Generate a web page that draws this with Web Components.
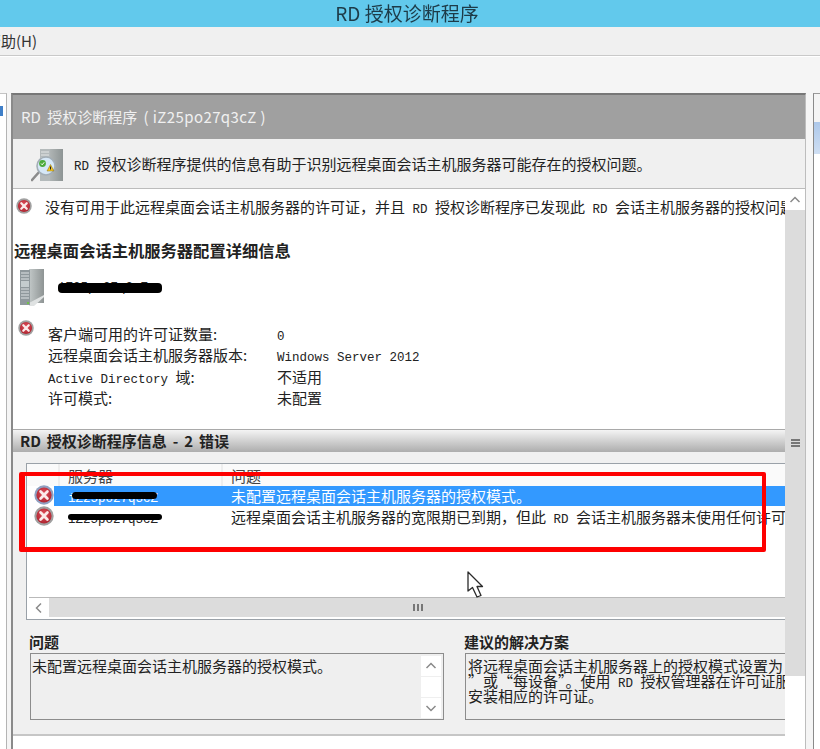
<!DOCTYPE html>
<html lang="zh-CN">
<head>
<meta charset="utf-8">
<title>RD 授权诊断程序</title>
<style>
  html, body { margin: 0; padding: 0; background: #f5f5f5; }
  body { width: 820px; height: 749px; overflow: hidden; font-family: "Noto Sans CJK SC", sans-serif; }
</style>
</head>
<body>
<rd-window>
  <title-bar>RD 授权诊断程序</title-bar>
  <menu-bar>帮助(H)</menu-bar>
  <tool-strip></tool-strip>
  <work-area>
    <left-pane slot="left"></left-pane>
    <result-panel></result-panel>
    <right-pane slot="right"></right-pane>
  </work-area>
  <red-frame slot="over"></red-frame>
  <mouse-pointer slot="over"></mouse-pointer>
</rd-window>

<script>
(function () {
  const define = (tag, html) => {
    customElements.define(tag, class extends HTMLElement {
      constructor() {
        super();
        this.shadow = this.attachShadow({ mode: 'open' });
        this.shadow.innerHTML = typeof html === 'function' ? html(this) : html;
      }
    });
  };

  define('rd-window', `
    <style>
      :host { display: block; position: relative; width: 820px; height: 749px; overflow: hidden; }
      .app { display: flex; flex-direction: column; height: 749px; filter: blur(0.45px); }
    </style>
    <div class="app"><slot></slot></div>
    <slot name="over"></slot>`);

  define('title-bar', `
    <style>
      :host { display: block; height: 27px; background: #62c9ec; color: #1d3b48; font-size: 19px; line-height: 26px;
              text-align: center; flex: none; }
      div { transform: translateX(-3px); }
    </style>
    <div><slot></slot></div>`);

  define('menu-bar', `
    <style>
      :host { display: block; height: 28px; background: #f0f0f0; border-bottom: 1px solid #c9c9c9; color: #333;
              font-size: 15px; line-height: 28px; flex: none; overflow: hidden; }
      div { margin-left: -14px; }
    </style>
    <div><slot></slot></div>`);

  define('tool-strip', `
    <style>:host { display: block; height: 37px; background: #f5f5f5; border-top: 1px solid #fff; box-sizing: border-box; flex: none; }</style>`);

  define('work-area', `
    <style>
      :host { display: flex; flex: 1; min-height: 0; }
    </style>
    <slot name="left"></slot><slot></slot><slot name="right"></slot>`);

  define('left-pane', `
    <style>
      :host { display: block; flex: none; width: 6px; margin-right: 4px; background: #fff; border-right: 1px solid #b4b4b4;
              border-top: 1px solid #c4c4c4; position: relative; }
      i { display: block; position: absolute; left: 0; top: 12px; width: 3px; height: 10px; background: #3f7fc8; }
    </style>
    <i></i>`);

  define('right-pane', `
    <style>
      :host { display: block; flex: 1; margin-left: 7px; background: #fff; border-left: 1px solid #8a8a8a; border-top: 1px solid #9a9a9a; }
      .head { height: 28px; background: #f4f4f4; }
      .sel { height: 32px; background: linear-gradient(#adc8ea, #cfdff3); }
    </style>
    <div class="head"></div><div class="sel"></div>`);

  define('error-icon', (el) => {
    const s = el.getAttribute('size') || 16;
    const ring = el.hasAttribute('selected') ? '#8f9fc0' : '#a0a0a0';
    return `
    <style>:host { display: block; flex: none; width: ${s}px; height: ${s}px; } svg { display: block; }</style>
    <svg width="${s}" height="${s}" viewBox="0 0 20 20">
      <defs><radialGradient id="g" cx="50%" cy="40%" r="60%"><stop offset="0" stop-color="#e4505c"/><stop offset="1" stop-color="#ad2430"/></radialGradient></defs>
      <circle cx="10" cy="10" r="9.7" fill="${ring}"/>
      <circle cx="10" cy="10" r="7.6" fill="url(#g)"/>
      <path d="M6.6 6.6 13.4 13.4M13.4 6.6 6.6 13.4" stroke="#fbeaea" stroke-width="2.8" stroke-linecap="round"/>
    </svg>`;
  });

  define('server-icon', `
    <style>:host { display: block; flex: none; width: 25px; height: 37px; } svg { display: block; }</style>
    <svg width="25" height="37" viewBox="0 0 25 37">
      <defs><linearGradient id="s" x1="0" x2="1" y1="0" y2="0"><stop offset="0" stop-color="#c2c8c8"/><stop offset="1" stop-color="#8e9494"/></linearGradient></defs>
      <rect x="10" y="0" width="15" height="34" fill="url(#s)"/>
      <path d="M25 28 15 37H10V34L25 26Z" fill="#dfe2e2"/>
      <rect x="1" y="1" width="10" height="35" fill="#8f989c"/>
      <path d="M2 4h8M2 7h8M2 10h8M2 20h8M2 23h8M2 26h8M2 29h8" stroke="#dde2e4" stroke-width="1.2"/>
      <rect x="2" y="12" width="8" height="6" fill="#c4ccce"/>
      <rect x="8" y="33" width="2" height="2" fill="#6fc04a"/>
    </svg>`);

  define('diagnose-icon', `
    <style>:host { display: block; flex: none; width: 33px; height: 34px; } svg { display: block; }</style>
    <svg width="33" height="34" viewBox="0 0 33 34">
      <defs><linearGradient id="d" x1="0" x2="1" y1="0" y2="0"><stop offset="0" stop-color="#c9cdcd"/><stop offset="1" stop-color="#8d9494"/></linearGradient></defs>
      <rect x="9" y="1" width="23" height="32" fill="url(#d)"/>
      <rect x="9" y="1" width="10" height="32" fill="#b4babb"/>
      <path d="M10 4h8M10 7h8M10 10h8" stroke="#e4e7e7"/>
      <path d="M9 23 1 32" stroke="#8b8b8b" stroke-width="2.6" stroke-linecap="round"/>
      <circle cx="15" cy="18" r="9" fill="#d6e8f7" stroke="#a3aeb6" stroke-width="1.6"/>
      <circle cx="11.5" cy="15.5" r="3.4" fill="#4cab3c"/>
      <path d="M10 15.5l1.2 1.3 2-2.5" fill="none" stroke="#fff" stroke-width="1"/>
      <path d="M16 23l3.5-6.5 3.5 6.5z" fill="#f4c61f" stroke="#8a6d10" stroke-width=".5"/>
      <rect x="19" y="18.5" width="1" height="3" fill="#222"/>
    </svg>`);

  define('redact-mark', (el) => `
    <style>
      :host { display: block; position: absolute; left: ${el.getAttribute('x')}px; top: ${el.getAttribute('y')}px;
              width: ${el.getAttribute('w')}px; height: ${el.getAttribute('h')}px; background: #000; border-radius: 4px; white-space: normal; }
    </style>`);

  define('scroll-button', (el) => {
    const paths = { up: 'M5.5 12 10 7.5 14.5 12', down: 'M5.5 8 10 12.5 14.5 8', left: 'M12 5.5 7.5 10 12 14.5' };
    const d = paths[el.getAttribute('dir')] || '';
    return `
    <style>
      :host { display: block; flex: none; width: 20px; height: 20px; background: #fff; box-sizing: border-box; }
      svg { display: block; }
    </style>
    <svg width="20" height="20" viewBox="0 0 20 20">${d ? `<path d="${d}" fill="none" stroke="#8a8a8a" stroke-width="1.5"/>` : ''}</svg>`;
  });

  define('page-scroll', `
    <style>
      :host { display: flex; flex-direction: column; flex: none; width: 20px; background: #fff; padding-top: 1px; box-sizing: border-box; }
      .thumb { height: 466px; background: #dcdcdc; display: flex; flex-direction: column; align-items: center; padding-top: 229px; box-sizing: border-box; }
      .grip { width: 9px; height: 2px; background: #777; box-shadow: 0 3px 0 #777, 0 6px 0 #777; }
    </style>
    <scroll-button dir="up"></scroll-button>
    <div class="thumb"><div class="grip"></div></div>`);

  define('list-scroll', `
    <style>
      :host { display: flex; flex: none; height: 20px; margin: auto 0 2px 2px; background: #dcdcdc; border-top: 1px solid #b9b9b9; box-sizing: border-box; }
      .grip { margin: 6px 0 0 364px; width: 2px; height: 7px; background: #777; box-shadow: 4px 0 0 #777, 8px 0 0 #777; }
      scroll-button { height: 19px; }
    </style>
    <scroll-button dir="left"></scroll-button>
    <div class="grip"></div>`);

  define('text-box', `
    <style>
      :host { display: flex; height: 67px; box-sizing: border-box; background: #efefef; border: 1px solid #8c8c8c; overflow: hidden; }
      .t { flex: 1; min-width: 0; padding: 4px 0 0 1px; font-size: 15px; line-height: 15px; white-space: pre; color: #222; overflow: hidden; }
      .bar { flex: none; display: flex; flex-direction: column; gap: 1px; width: 20px; margin: 2px 2px 0 0; }
      .bar scroll-button { height: 20px; }
    </style>
    <div class="t"><slot></slot></div>
    <div class="bar"><scroll-button dir="up"></scroll-button><scroll-button></scroll-button><scroll-button dir="down"></scroll-button></div>`);

  define('answer-box', `
    <style>
      :host { display: block; width: 340px; height: 67px; box-sizing: border-box; background: #efefef; border: 1px solid #8c8c8c; border-right: 0;
              overflow: hidden; }
      .t { padding: 4px 0 0 2px; font-size: 15px; line-height: 15px; white-space: pre; color: #222; }
      ::slotted(span) { font-family: "Liberation Mono", monospace; font-size: 12.5px; line-height: 0; }
    </style>
    <div class="t"><slot></slot></div>`);

  define('list-view', `
    <style>
      :host { display: flex; flex-direction: column; height: 157px; box-sizing: border-box; margin: 11px 0 0 13px; background: #fff; color: #222;
              border: 1px solid #9aa1a8; border-right: 0; font-size: 15px; position: relative; }
      .head { display: flex; height: 22px; background: #fafafa; line-height: 24px; color: #444; flex: none; }
      .head div { box-sizing: border-box; border-right: 2px solid #eee; padding-left: 8px; overflow: hidden; }
      .head .a { width: 33px; padding: 0; }
      .head .b { width: 163px; }
      .head .c { flex: 1; border: 0; }
      .row { display: flex; height: 21px; flex: none; line-height: 20px; padding-left: 7px; }
      .cells { flex: 1; display: flex; min-width: 0; height: 20px; overflow: hidden; white-space: pre; }
      .row error-icon { margin-top: -1px; }
      .sel .cells { background: #3399ff; color: #fff; }
      .name { flex: none; width: 177px; box-sizing: border-box; padding-left: 14px; position: relative; }
      .m { font-family: "Liberation Mono", monospace; font-size: 12.5px; }
    </style>
    <div class="head"><div class="a"></div><div class="b">服务器</div><div class="c">问题</div></div>
    <div class="row sel"><error-icon size="20" selected></error-icon><div class="cells"><div class="name"><span class="m">iZ25po27q3cZ</span><redact-mark x="18" y="6" w="85" h="7"></redact-mark></div><div>未配置远程桌面会话主机服务器的授权模式。</div></div></div>
    <div class="row"><error-icon size="20"></error-icon><div class="cells"><div class="name"><span class="m">iZ25po27q3cZ</span><redact-mark x="14" y="7" w="94" h="6"></redact-mark></div><div>远程桌面会话主机服务器的宽限期已到期，但此<span class="m"> RD </span>会话主机服务器未使用任何许可证服务器。</div></div></div>
    <list-scroll></list-scroll>`);

  define('config-details', `
    <style>
      :host { display: flex; gap: 14px; margin: 14px 0 0 5px; color: #222; }
      .rows { display: grid; grid-template-columns: 229px 1fr; grid-auto-rows: 21.3px; padding-top: 3px; font-size: 15px; line-height: 21px; }
      .m { font-family: "Liberation Mono", monospace; font-size: 12.5px; }
      .v { padding-top: 4px; }
    </style>
    <error-icon size="16"></error-icon>
    <div class="rows">
      <div>客户端可用的许可证数量:</div><div class="m v">0</div>
      <div>远程桌面会话主机服务器版本:</div><div class="m v">Windows Server 2012</div>
      <div><span class="m">Active Directory </span>域:</div><div>不适用</div>
      <div>许可模式:</div><div>未配置</div>
    </div>`);

  define('result-panel', `
    <style>
      :host { display: flex; flex-direction: column; flex: none; width: 795px; box-sizing: border-box; overflow: hidden; background: #f0f0f0;
              border-left: 2px solid #8a8a8a; border-top: 2px solid #777; border-right: 1px solid #bdbdbd; color: #222; }
      .m { font-family: "Liberation Mono", monospace; font-size: 12.5px; }
      .tx { white-space: pre; }
      .title { flex: none; height: 44px; background: #a0a0a0; color: #f0f0f0; font-size: 15px; line-height: 44px; padding-left: 8px; word-spacing: 3px; }
      .title span { word-spacing: 0; letter-spacing: 0.4px; }
      .intro { flex: none; height: 50px; display: flex; align-items: center; box-sizing: border-box; padding: 0 0 0 18px; gap: 10px;
               font-size: 15px; border-bottom: 1px solid #bcbcbc; }
      .intro diagnose-icon { margin-top: 2px; }
      .body { flex: 1; min-height: 0; display: flex; }
      .main { flex: 1; min-width: 0; display: flex; flex-direction: column; overflow: hidden; }
      .top { flex: none; height: 240px; box-sizing: border-box; background: #fff; }
      .alert { display: flex; align-items: center; height: 34px; padding-left: 3px; gap: 13px; font-size: 15px; overflow: hidden; }
      h2 { margin: 17px 0 0 1px; font-size: 16.3px; line-height: 20px; font-weight: 700; color: #222; }
      .server { display: flex; align-items: center; gap: 14px; margin: 9px 0 0 6px; height: 37px; }
      .server div { position: relative; font-size: 12.5px; font-family: "Liberation Mono", monospace; }
      .band { flex: none; height: 23px; box-sizing: border-box; border-top: 1px solid #a9a9a9; background: linear-gradient(#f4f4f4, #adadad);
              font-size: 15px; line-height: 22px; font-weight: 700; padding-left: 7px; color: #222; word-spacing: 2.5px; }
      .lower { flex: none; height: 282px; box-sizing: border-box; }
      .cols { display: flex; gap: 20px; margin: 12px 0 0 16px; }
      .cols h3 { margin: 0 0 1px; font-size: 15px; line-height: 20px; font-weight: 700; }
      .c1 { flex: none; width: 415px; }
      .c1 text-box { margin-left: 1px; }
      .c2 { flex: none; width: 340px; }
      .c2 answer-box { margin-left: 1px; }
      .foot { flex: none; height: 13px; border-top: 2px solid #c6c6c6; background: #fff; }
    </style>
    <div class="title">RD 授权诊断程序 <span>( iZ25po27q3cZ )</span></div>
    <div class="intro"><diagnose-icon></diagnose-icon><div class="tx"><span class="m">RD </span>授权诊断程序提供的信息有助于识别远程桌面会话主机服务器可能存在的授权问题。</div></div>
    <div class="body">
      <div class="main">
        <div class="top">
          <div class="alert"><error-icon size="16"></error-icon><div class="tx">没有可用于此远程桌面会话主机服务器的许可证，并且<span class="m"> RD </span>授权诊断程序已发现此<span class="m"> RD </span>会话主机服务器的授权问题。</div></div>
          <h2>远程桌面会话主机服务器配置详细信息</h2>
          <div class="server"><server-icon></server-icon><div>iZ25po27q3cZ<redact-mark x="0" y="2" w="104" h="10"></redact-mark></div></div>
          <config-details></config-details>
        </div>
        <div class="band">RD 授权诊断程序信息 - 2 错误</div>
        <div class="lower">
          <list-view></list-view>
          <div class="cols">
            <div class="c1">
              <h3>问题</h3>
              <text-box>未配置远程桌面会话主机服务器的授权模式。</text-box>
            </div>
            <div class="c2">
              <h3>建议的解决方案</h3>
              <answer-box>将远程桌面会话主机服务器上的授权模式设置为“每用户
”或“每设备”。使用<span> RD </span>授权管理器在许可证服务器上
安装相应的许可证。</answer-box>
            </div>
          </div>
        </div>
        <div class="foot"></div>
      </div>
      <page-scroll></page-scroll>
    </div>`);

  define('red-frame', `
    <style>
      :host { display: block; position: absolute; left: 19px; top: 472px; width: 747px; height: 80px; box-sizing: border-box;
              border: solid #fe0000; border-width: 4px 4px 5px 6px; border-radius: 2px; }
    </style>`);

  define('mouse-pointer', `
    <style>
      :host { display: block; position: absolute; left: 467px; top: 571px; width: 18px; height: 28px; }
      svg { display: block; }
    </style>
    <svg width="18" height="28" viewBox="0 0 18 28">
      <path d="M1 1V20L5.5 16.5 10 26 14 24.5 10 15.5H15.5Z" fill="#fff" stroke="#2a2a2a" stroke-width="1.3" stroke-linejoin="round"/>
    </svg>`);
})();
</script>
</body>
</html>
